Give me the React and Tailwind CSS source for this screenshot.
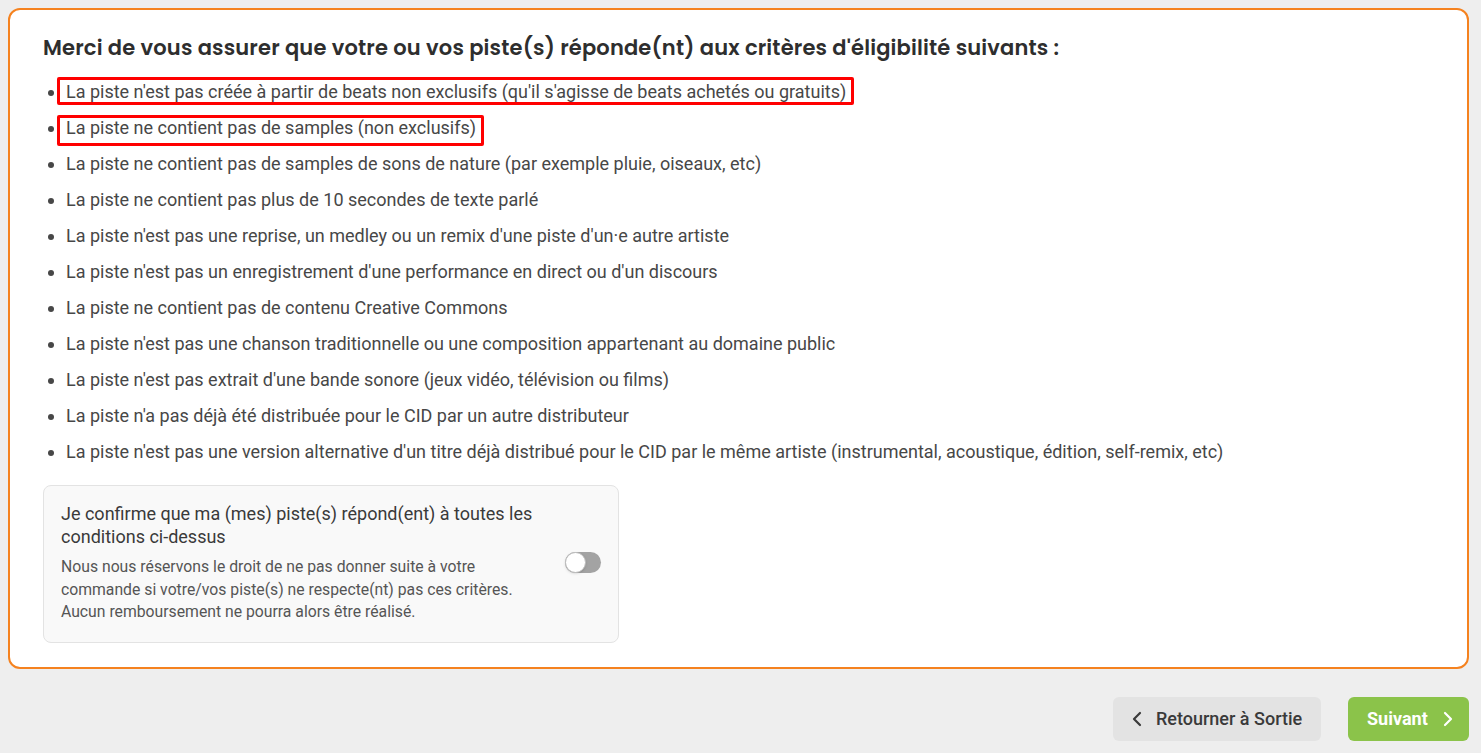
import { useState } from "react"

const criteria = [
	{ text: "La piste n'est pas créée à partir de beats non exclusifs (qu'il s'agisse de beats achetés ou gratuits)", flagged: true },
	{ text: "La piste ne contient pas de samples (non exclusifs)", flagged: true },
	{ text: "La piste ne contient pas de samples de sons de nature (par exemple pluie, oiseaux, etc)" },
	{ text: "La piste ne contient pas plus de 10 secondes de texte parlé" },
	{ text: "La piste n'est pas une reprise, un medley ou un remix d'une piste d'un·e autre artiste" },
	{ text: "La piste n'est pas un enregistrement d'une performance en direct ou d'un discours" },
	{ text: "La piste ne contient pas de contenu Creative Commons" },
	{ text: "La piste n'est pas une chanson traditionnelle ou une composition appartenant au domaine public" },
	{ text: "La piste n'est pas extrait d'une bande sonore (jeux vidéo, télévision ou films)" },
	{ text: "La piste n'a pas déjà été distribuée pour le CID par un autre distributeur" },
	{ text: "La piste n'est pas une version alternative d'un titre déjà distribué pour le CID par le même artiste (instrumental, acoustique, édition, self-remix, etc)" },
]

const Chevron = ({ dir }) => (
	<svg width="10" height="16" viewBox="0 0 10 16" fill="none" stroke="currentColor" strokeWidth="2.2" strokeLinecap="round" strokeLinejoin="round" className="shrink-0">
		<path d={dir === "left" ? "M8 2 L2 8 L8 14" : "M2 2 L8 8 L2 14"} />
	</svg>
)

const Toggle = ({ checked, onChange }) => (
	<button
		type="button"
		onClick={() => onChange(!checked)}
		className={
			"relative shrink-0 w-[36px] h-[21px] rounded-full " +
			(checked ? "bg-[#8bc34a]" : "bg-[#a3a3a3]")
		}
	>
		<span
			className={
				"absolute top-0 w-[21px] h-[21px] rounded-full bg-white border border-[#bdbdbd] shadow-sm " +
				(checked ? "left-[15px]" : "left-0")
			}
		/>
	</button>
)

export default function App() {
	const [confirmed, setConfirmed] = useState(false)

	return (
		<div className="min-h-screen bg-[#eeeeee] pl-2 pr-3 pt-2 pb-3 font-['Roboto',sans-serif] text-[#474747]">
			<div className="bg-white border-2 border-[#f5821f] rounded-[12px] px-[33px] pt-6 pb-6">
				<h2 className="font-['Poppins','Inter',sans-serif] font-semibold text-[21px] leading-[28px] text-[#2e2e2e] tracking-[0.17px]">
					Merci de vous assurer que votre ou vos piste(s) réponde(nt) aux critères d'éligibilité suivants :
				</h2>
				<ul className="mt-3 list-disc pl-[23px] text-[18px] leading-[36px]">
					{criteria.map((item, index) => (
						<li key={index}>
							<span className="relative">
								{item.text}
								{item.flagged && (
									<span
										className={
											"absolute -left-[9px] -right-[8px] border-[3px] border-[#ff0000] rounded-[2px] " +
											(index === 0 ? "-top-[4px] -bottom-[3px]" : "-top-[2px] -bottom-[8px]")
										}
									/>
								)}
							</span>
						</li>
					))}
				</ul>
				<div className="mt-[15px] w-[576px] bg-[#f9f9f9] border border-[#e3e3e3] rounded-[8px] pl-[17px] pr-[17px] pt-4 pb-[18px] flex items-center gap-5">
					<div className="flex-1">
						<p className="text-[18px] leading-[23px] text-[#3a3a3a]">
							Je confirme que ma (mes) piste(s) répond(ent) à toutes les
							<br />
							conditions ci-dessus
						</p>
						<p className="mt-2 text-[15.75px] leading-[22.5px] text-[#555555]">
							Nous nous réservons le droit de ne pas donner suite à votre
							<br />
							commande si votre/vos piste(s) ne respecte(nt) pas ces critères.
							<br />
							Aucun remboursement ne pourra alors être réalisé.
						</p>
					</div>
					<Toggle checked={confirmed} onChange={setConfirmed} />
				</div>
			</div>
			<div className="mt-[28px] flex justify-end gap-[27px]">
				<button
					type="button"
					className="h-[44px] w-[208px] flex items-center gap-[14px] pl-[19px] rounded-[6px] bg-[#e3e3e3] text-[18px] font-medium text-[#3a3a3a]"
				>
					<Chevron dir="left" />
					Retourner à Sortie
				</button>
				<button
					type="button"
					className="h-[44px] w-[121px] flex items-center gap-[15px] pl-[19px] rounded-[6px] bg-[#8bc34a] text-[18px] font-bold text-white"
				>
					Suivant
					<Chevron dir="right" />
				</button>
			</div>
		</div>
	)
}
